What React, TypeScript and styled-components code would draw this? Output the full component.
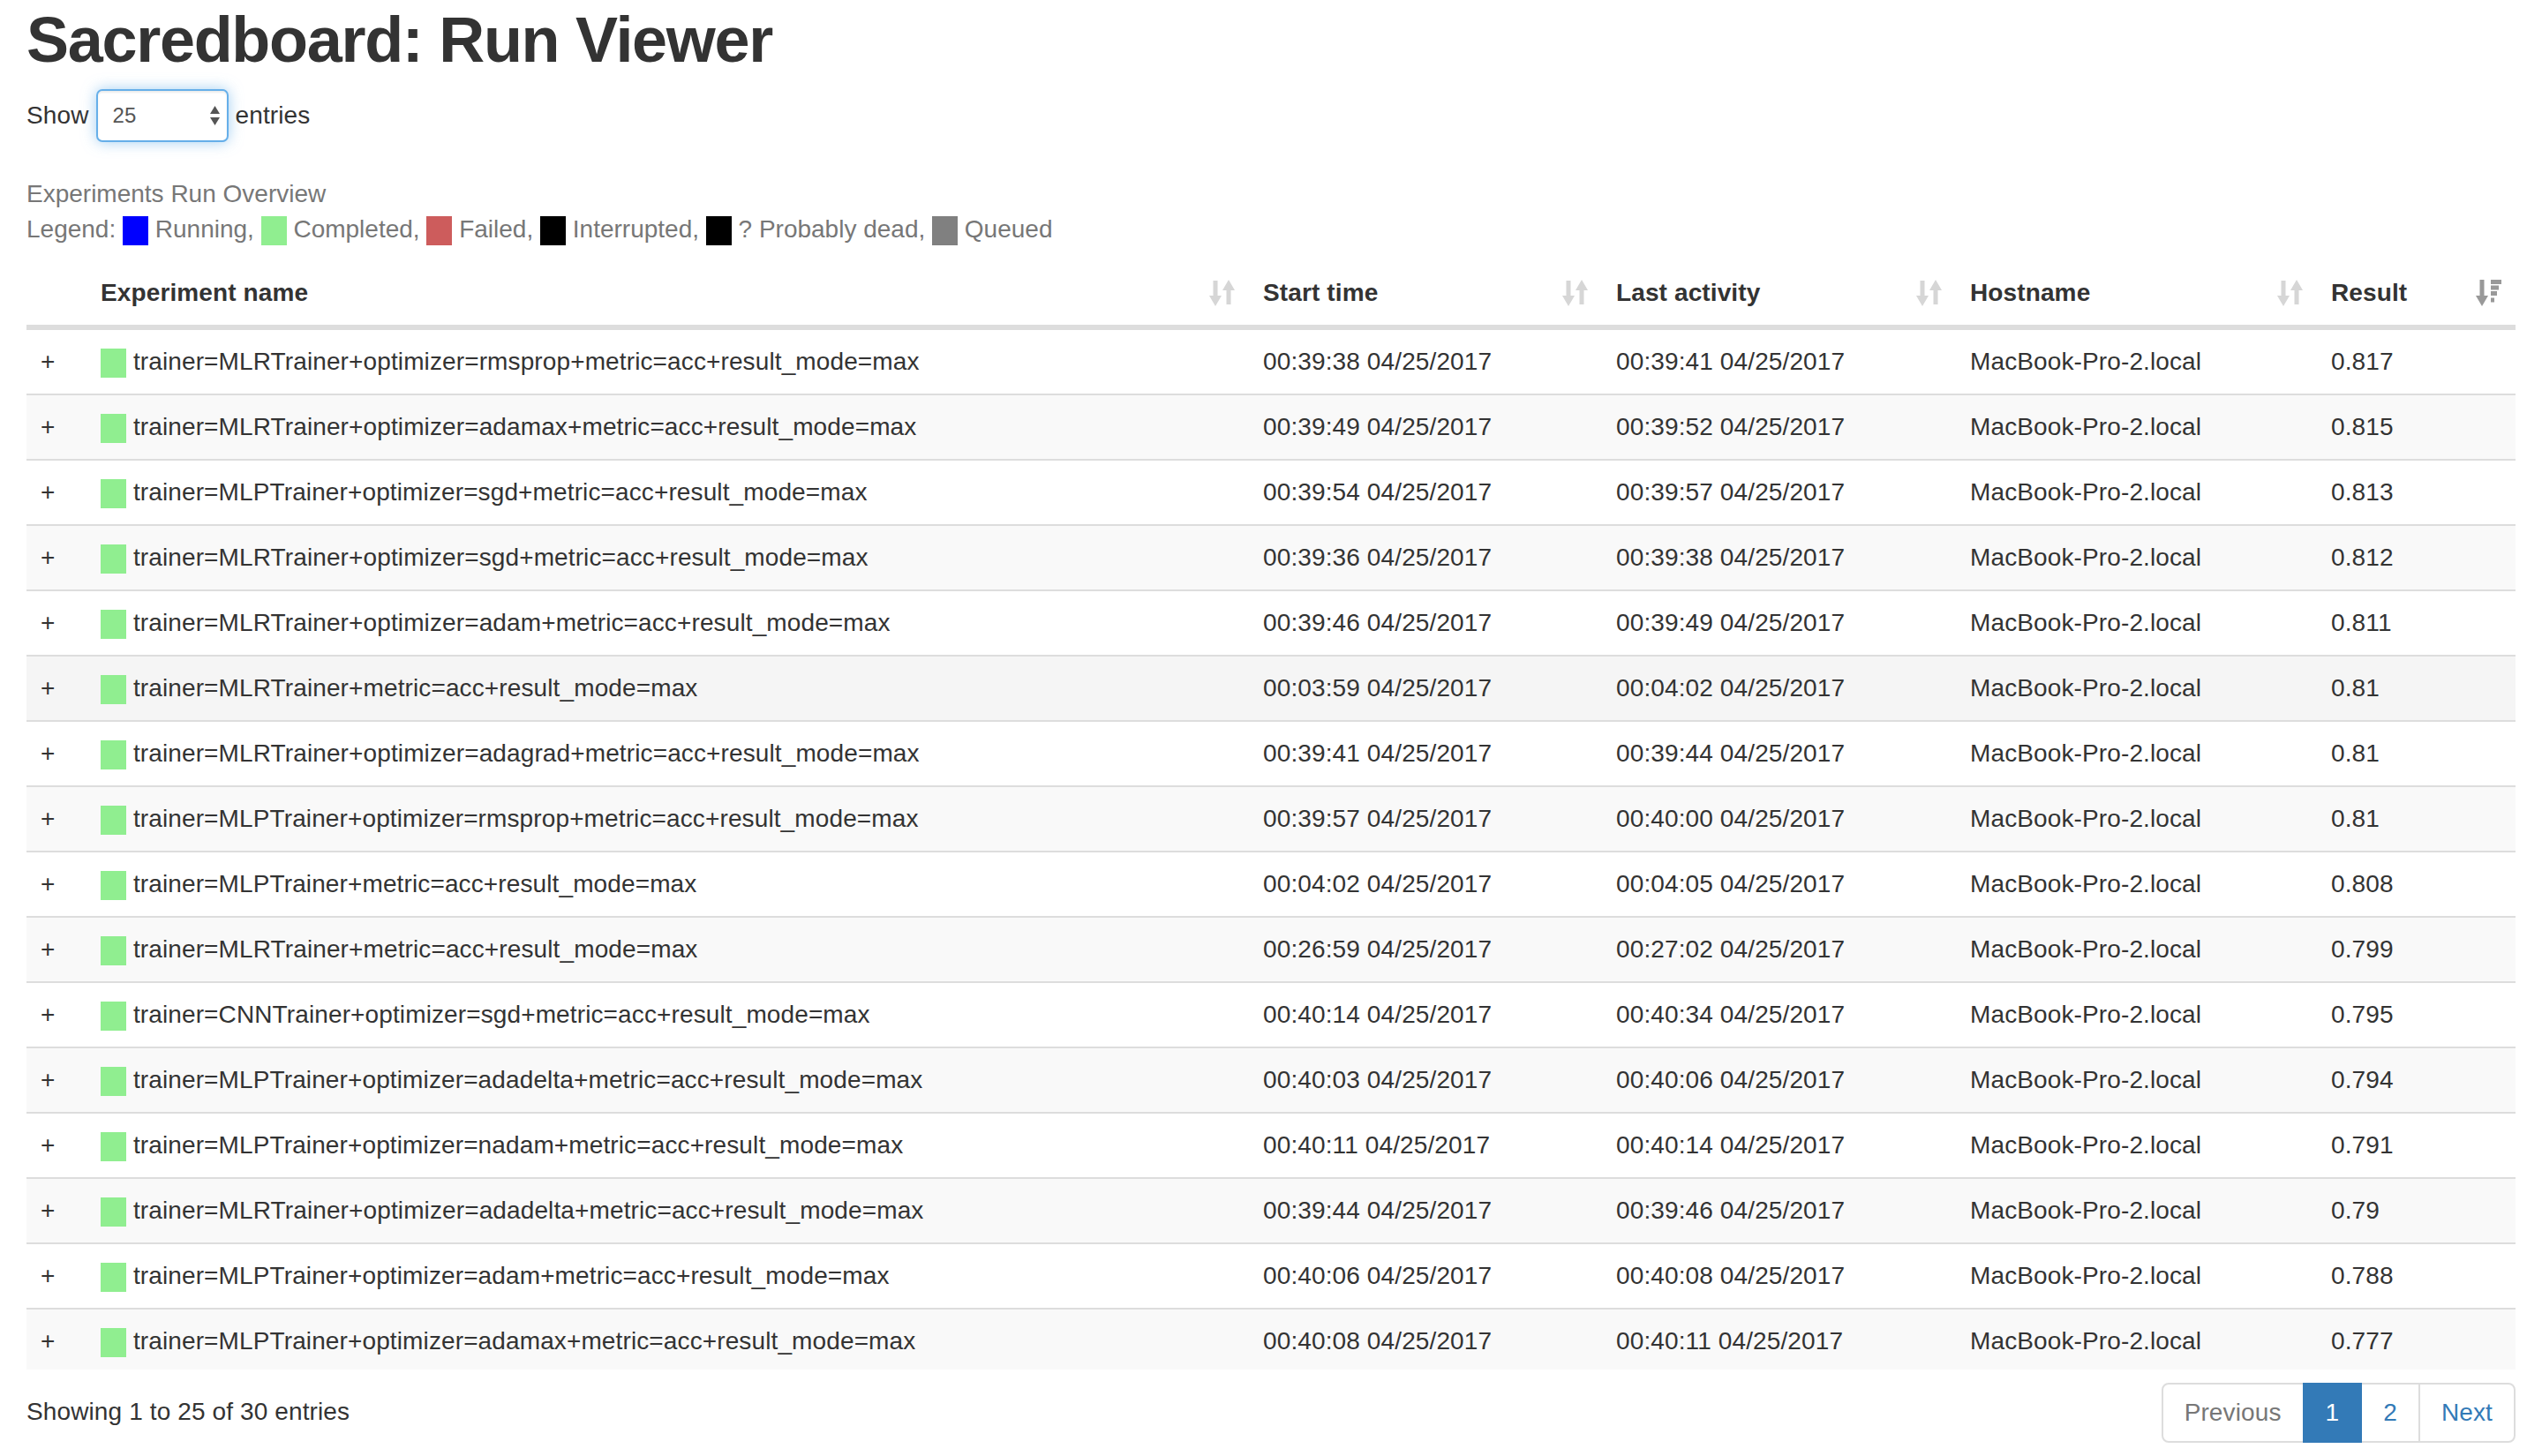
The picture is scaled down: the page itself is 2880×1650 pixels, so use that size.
import styled, { createGlobalStyle } from "styled-components";

const GlobalStyle = createGlobalStyle`
  * { box-sizing: border-box; }
  html, body { margin: 0; padding: 0; background: #fff; }
  body {
    font-family: "Liberation Sans", Arial, sans-serif;
    font-size: 28px;
    line-height: 40px;
    letter-spacing: 0.12px;
    color: #333;
  }
`;

type Run = {
  name: string;
  start: string;
  last: string;
  result: string;
};

const runs: Run[] = [
  { name: "trainer=MLRTrainer+optimizer=rmsprop+metric=acc+result_mode=max", start: "00:39:38", last: "00:39:41", result: "0.817" },
  { name: "trainer=MLRTrainer+optimizer=adamax+metric=acc+result_mode=max", start: "00:39:49", last: "00:39:52", result: "0.815" },
  { name: "trainer=MLPTrainer+optimizer=sgd+metric=acc+result_mode=max", start: "00:39:54", last: "00:39:57", result: "0.813" },
  { name: "trainer=MLRTrainer+optimizer=sgd+metric=acc+result_mode=max", start: "00:39:36", last: "00:39:38", result: "0.812" },
  { name: "trainer=MLRTrainer+optimizer=adam+metric=acc+result_mode=max", start: "00:39:46", last: "00:39:49", result: "0.811" },
  { name: "trainer=MLRTrainer+metric=acc+result_mode=max", start: "00:03:59", last: "00:04:02", result: "0.81" },
  { name: "trainer=MLRTrainer+optimizer=adagrad+metric=acc+result_mode=max", start: "00:39:41", last: "00:39:44", result: "0.81" },
  { name: "trainer=MLPTrainer+optimizer=rmsprop+metric=acc+result_mode=max", start: "00:39:57", last: "00:40:00", result: "0.81" },
  { name: "trainer=MLPTrainer+metric=acc+result_mode=max", start: "00:04:02", last: "00:04:05", result: "0.808" },
  { name: "trainer=MLRTrainer+metric=acc+result_mode=max", start: "00:26:59", last: "00:27:02", result: "0.799" },
  { name: "trainer=CNNTrainer+optimizer=sgd+metric=acc+result_mode=max", start: "00:40:14", last: "00:40:34", result: "0.795" },
  { name: "trainer=MLPTrainer+optimizer=adadelta+metric=acc+result_mode=max", start: "00:40:03", last: "00:40:06", result: "0.794" },
  { name: "trainer=MLPTrainer+optimizer=nadam+metric=acc+result_mode=max", start: "00:40:11", last: "00:40:14", result: "0.791" },
  { name: "trainer=MLRTrainer+optimizer=adadelta+metric=acc+result_mode=max", start: "00:39:44", last: "00:39:46", result: "0.79" },
  { name: "trainer=MLPTrainer+optimizer=adam+metric=acc+result_mode=max", start: "00:40:06", last: "00:40:08", result: "0.788" },
  { name: "trainer=MLPTrainer+optimizer=adamax+metric=acc+result_mode=max", start: "00:40:08", last: "00:40:11", result: "0.777" },
];

const DATE = "04/25/2017";
const HOST = "MacBook-Pro-2.local";

// widths of: details toggle, name, start, last activity, host, result
const COLUMNS = "68px 1317px 400px 401px 409px 225px";

function SortBoth() {
  return (
    <SortSvg viewBox="0 0 30 30" $color="#d6d6d6">
      <rect x="4.5" y="1" width="5" height="19" />
      <polygon points="0,18 14,18 7,30" />
      <polygon points="15,12 29,12 22,0" />
      <rect x="19.5" y="10" width="5" height="18" />
    </SortSvg>
  );
}

function SortDesc() {
  return (
    <SortSvg viewBox="0 0 30 30" $color="#999">
      <rect x="4.5" y="0" width="5" height="20" />
      <polygon points="0,18 14,18 7,30" />
      <rect x="17" y="0" width="12" height="5" />
      <rect x="17" y="6.5" width="9" height="5" />
      <rect x="17" y="13" width="7" height="5" />
      <rect x="17" y="20.5" width="4" height="5" />
    </SortSvg>
  );
}

export default function App() {
  return (
    <>
      <GlobalStyle />
      <Page>
        <Title>Sacredboard: Run Viewer</Title>

        <LengthControl>
          Show
          <SelectBox>
            <span>25</span>
            <svg width="11" height="22" viewBox="0 0 11 22">
              <polygon points="0,9 11,9 5.5,0" fill="#555" />
              <polygon points="0,13 11,13 5.5,22" fill="#555" />
            </svg>
          </SelectBox>
          entries
        </LengthControl>

        <Caption>Experiments Run Overview</Caption>
        <Legend>
          Legend: <Swatch $color="#0000ff" /> Running, <Swatch $color="#90ee90" /> Completed,{" "}
          <Swatch $color="#cd5c5c" /> Failed, <Swatch $color="#000" /> Interrupted,{" "}
          <Swatch $color="#000" /> ? Probably dead, <Swatch $color="#808080" /> Queued
        </Legend>

        <HeadRow>
          <HeadCell />
          <HeadCell>Experiment name<SortBoth /></HeadCell>
          <HeadCell>Start time<SortBoth /></HeadCell>
          <HeadCell>Last activity<SortBoth /></HeadCell>
          <HeadCell>Hostname<SortBoth /></HeadCell>
          <HeadCell>Result<SortDesc /></HeadCell>
        </HeadRow>

        <ScrollBody>
          {runs.map((run, i) => (
            <Row key={i} $striped={i % 2 === 1} $hover={i === 5}>
              <Cell>+</Cell>
              <Cell>
                <Swatch $color="#90ee90" /> {run.name}
              </Cell>
              <Cell>{run.start} {DATE}</Cell>
              <Cell>{run.last} {DATE}</Cell>
              <Cell>{HOST}</Cell>
              <Cell>{run.result}</Cell>
            </Row>
          ))}
        </ScrollBody>

        <Footer>
          <Info>Showing 1 to 25 of 30 entries</Info>
          <Pagination>
            <PageItem><PageLink $disabled>Previous</PageLink></PageItem>
            <PageItem><PageLink $active>1</PageLink></PageItem>
            <PageItem><PageLink>2</PageLink></PageItem>
            <PageItem><PageLink>Next</PageLink></PageItem>
          </Pagination>
        </Footer>
      </Page>
    </>
  );
}

const Page = styled.div`
  padding: 6px 30px 0;
`;

const Title = styled.h1`
  margin: 0;
  font-size: 72px;
  line-height: 79px;
  font-weight: 700;
  letter-spacing: -1.3px;
  color: #333;
`;

const LengthControl = styled.div`
  display: flex;
  align-items: center;
  gap: 8px;
  margin-top: 16px;
  height: 60px;
`;

const SelectBox = styled.div`
  width: 150px;
  height: 60px;
  display: flex;
  align-items: center;
  justify-content: space-between;
  padding: 0 8px 0 17px;
  border: 2px solid #66afe9;
  border-radius: 7px;
  background: #fff;
  font-size: 24px;
  color: #555;
  box-shadow: inset 0 2px 2px rgba(0, 0, 0, 0.075), 0 0 16px rgba(102, 175, 233, 0.6);
`;

const Caption = styled.div`
  margin-top: 39px;
  color: #777;
  letter-spacing: 0;
`;

const Legend = styled.div`
  color: #777;
  letter-spacing: 0;
`;

const Swatch = styled.span<{ $color: string }>`
  display: inline-block;
  width: 29px;
  height: 33px;
  vertical-align: middle;
  background: ${(p) => p.$color};
`;

const HeadRow = styled.div`
  display: grid;
  grid-template-columns: ${COLUMNS};
  margin-top: 16px;
  border-bottom: 4px solid #ddd;
`;

const HeadCell = styled.div`
  position: relative;
  padding: 16px 60px 16px 16px;
  font-weight: 700;
  white-space: nowrap;
`;

const SortSvg = styled.svg<{ $color: string }>`
  position: absolute;
  top: 21px;
  right: 15px;
  width: 30px;
  height: 30px;
  fill: ${(p) => p.$color};
`;

const ScrollBody = styled.div`
  height: 1180px;
  overflow: hidden;
`;

const Row = styled.div<{ $striped: boolean; $hover: boolean }>`
  display: grid;
  grid-template-columns: ${COLUMNS};
  border-top: 2px solid #ddd;
  background: ${(p) => (p.$hover ? "#f5f5f5" : p.$striped ? "#f9f9f9" : "#fff")};
`;

const Cell = styled.div`
  padding: 16px;
  white-space: nowrap;
  overflow: hidden;
`;

const Footer = styled.div`
  display: flex;
  justify-content: space-between;
  align-items: center;
  margin-top: 15px;
`;

const Info = styled.div`
  color: #333;
  margin-top: -2px;
`;

const Pagination = styled.ul`
  display: flex;
  margin: 0;
  padding: 0;
  list-style: none;
`;

const PageItem = styled.li`
  display: flex;
  margin-left: -2px;

  &:first-child {
    margin-left: 0;
  }
  &:first-child > span {
    border-radius: 8px 0 0 8px;
  }
  &:last-child > span {
    border-radius: 0 8px 8px 0;
  }
`;

const PageLink = styled.span<{ $active?: boolean; $disabled?: boolean }>`
  position: relative;
  z-index: ${(p) => (p.$active ? 2 : 1)};
  padding: 12px 24px;
  line-height: 40px;
  border: 2px solid ${(p) => (p.$active ? "#337ab7" : "#ddd")};
  background: ${(p) => (p.$active ? "#337ab7" : "#fff")};
  color: ${(p) => (p.$active ? "#fff" : p.$disabled ? "#777" : "#337ab7")};
`;
